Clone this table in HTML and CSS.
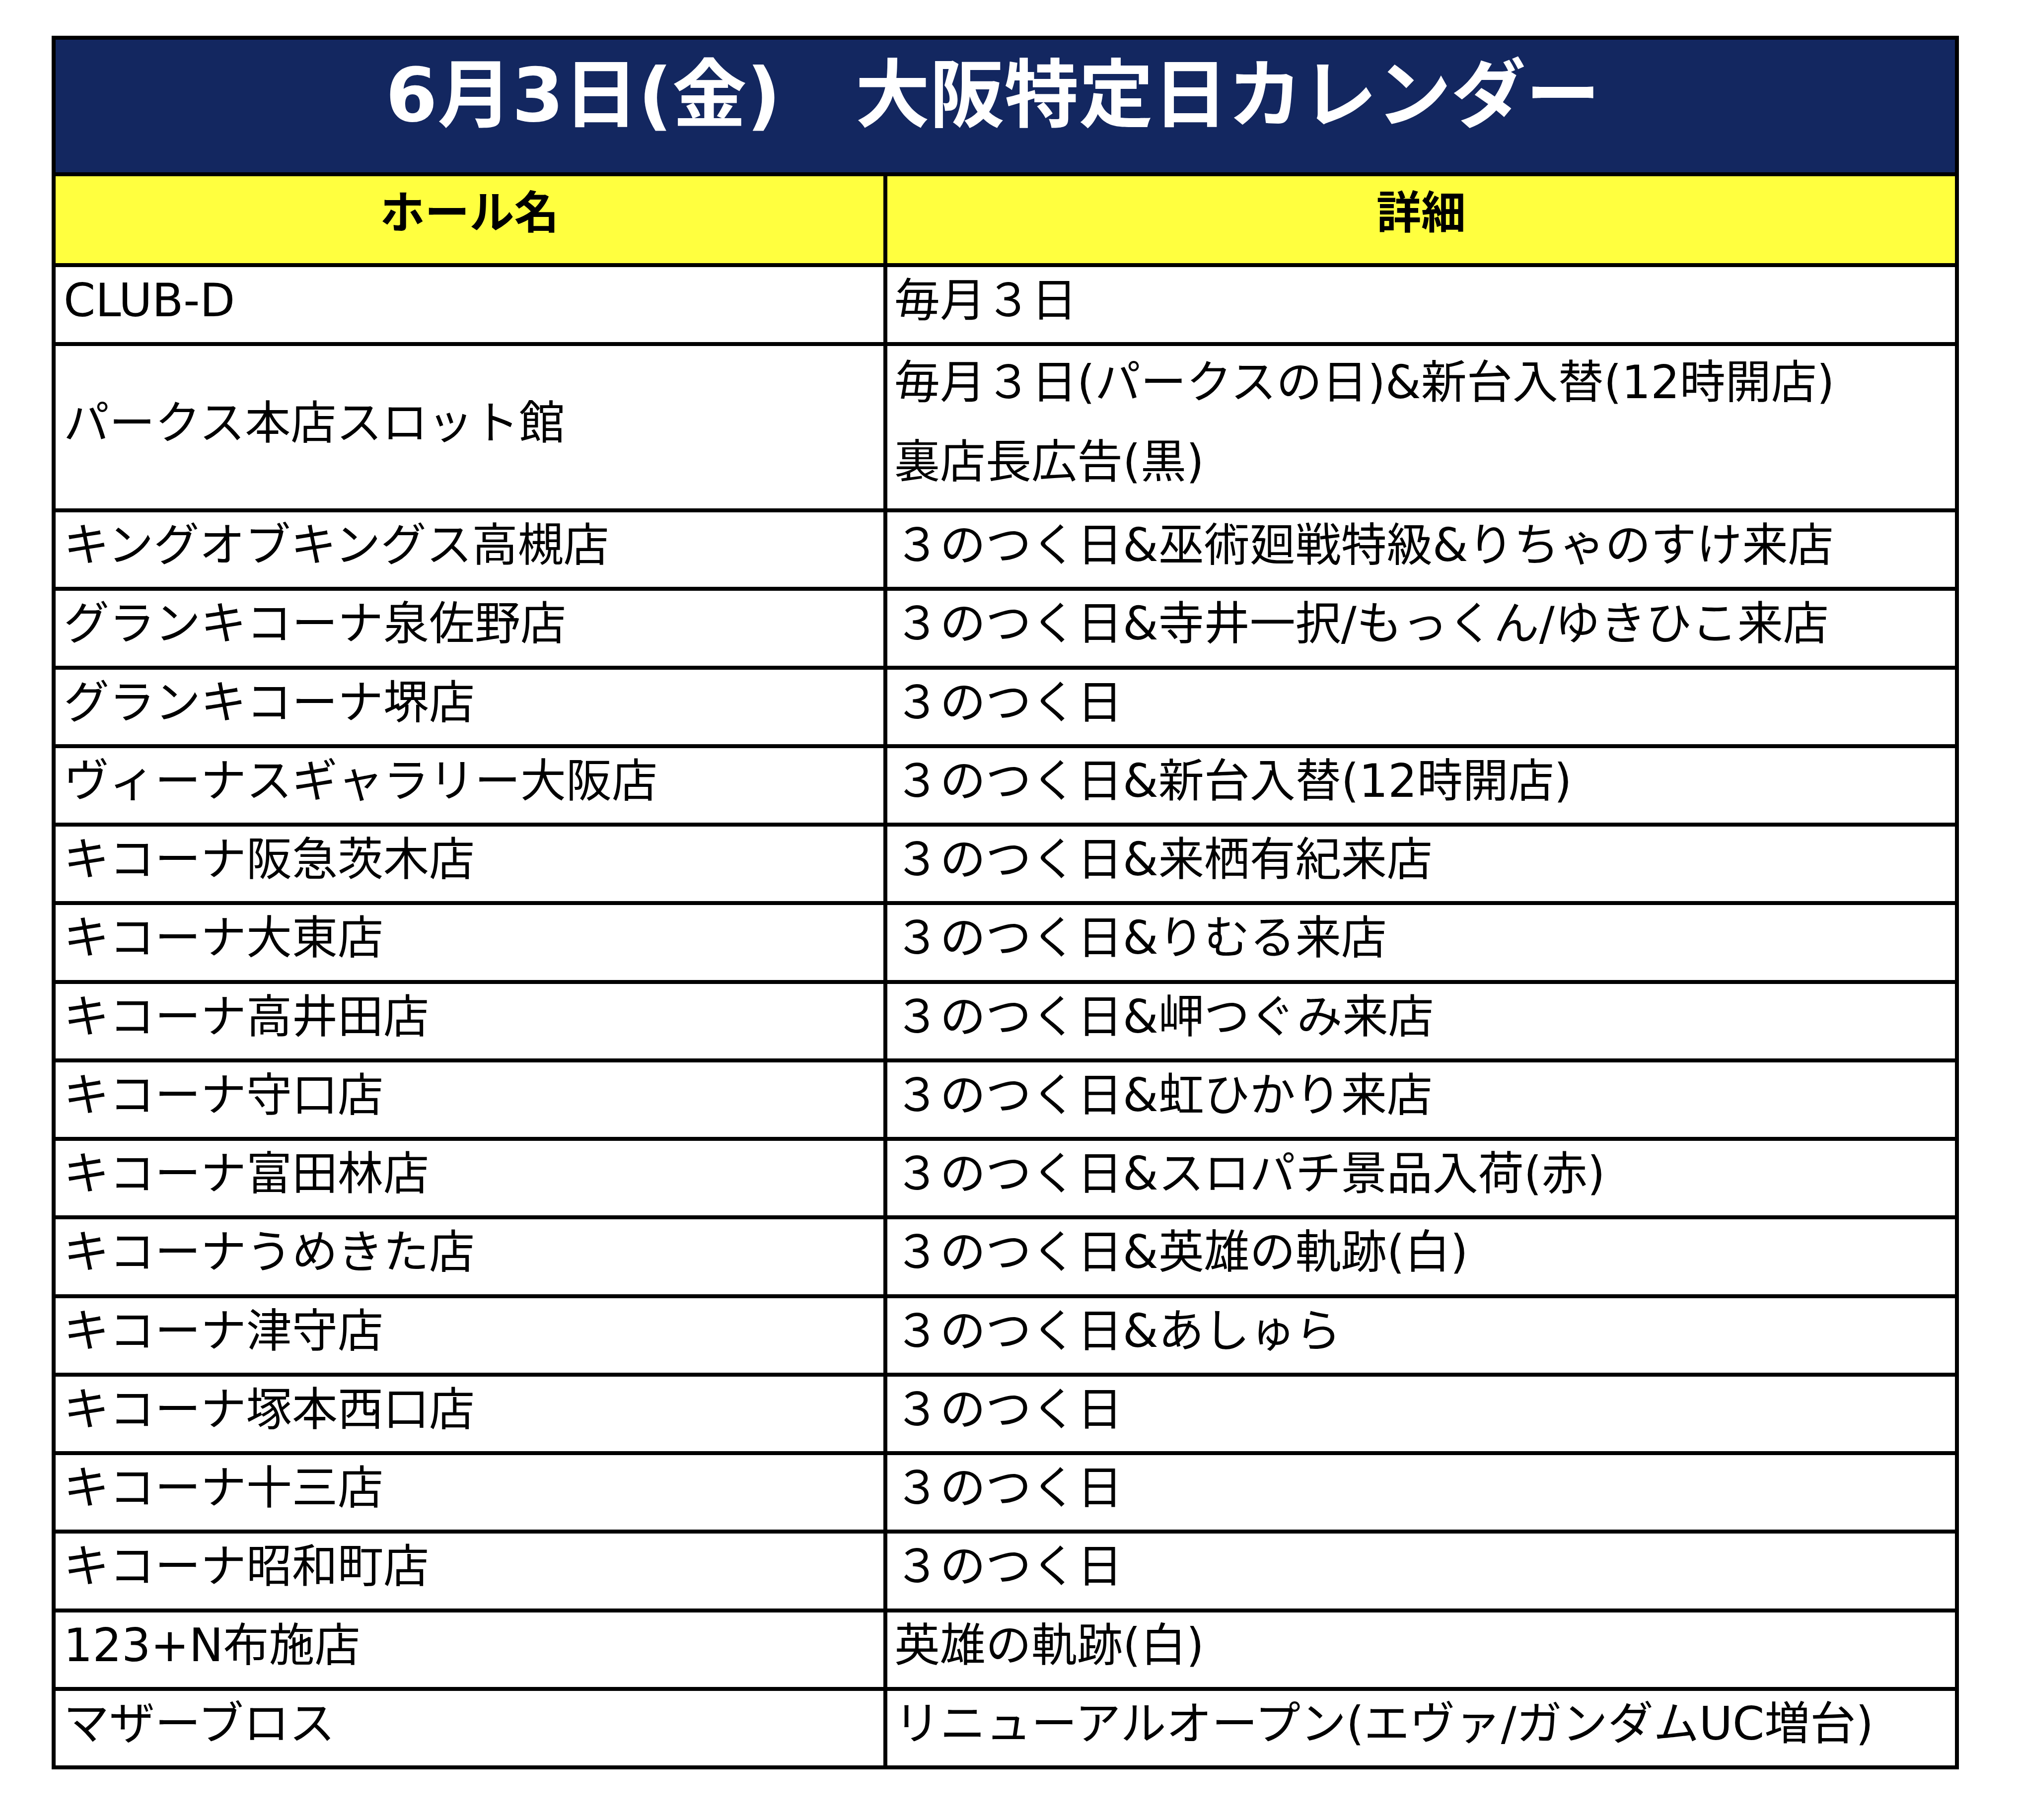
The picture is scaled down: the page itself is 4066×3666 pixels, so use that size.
FILE: index.html
```html
<!DOCTYPE html>
<html lang="ja">
<head>
<meta charset="utf-8">
<title>6月3日(金) 大阪特定日カレンダー</title>
<link rel="stylesheet" href="styles.css">
</head>
<body>
<div class="sheet">
  <div class="title">6月3日(金)　大阪特定日カレンダー</div>
  <div class="row head">
    <div class="cell name">ホール名</div>
    <div class="cell detail">詳細</div>
  </div>
  <div class="row first">
    <div class="cell name">CLUB-D</div>
    <div class="cell detail">毎月３日</div>
  </div>
  <div class="row double">
    <div class="cell name">パークス本店スロット館</div>
    <div class="cell detail"><span class="line">毎月３日(パークスの日)&amp;新台入替(12時開店)</span><span class="line">裏店長広告(黒)</span></div>
  </div>
  <div class="row">
    <div class="cell name">キングオブキングス高槻店</div>
    <div class="cell detail">３のつく日&amp;巫術廻戦特級&amp;りちゃのすけ来店</div>
  </div>
  <div class="row">
    <div class="cell name">グランキコーナ泉佐野店</div>
    <div class="cell detail">３のつく日&amp;寺井一択/もっくん/ゆきひこ来店</div>
  </div>
  <div class="row">
    <div class="cell name">グランキコーナ堺店</div>
    <div class="cell detail">３のつく日</div>
  </div>
  <div class="row">
    <div class="cell name">ヴィーナスギャラリー大阪店</div>
    <div class="cell detail">３のつく日&amp;新台入替(12時開店)</div>
  </div>
  <div class="row">
    <div class="cell name">キコーナ阪急茨木店</div>
    <div class="cell detail">３のつく日&amp;来栖有紀来店</div>
  </div>
  <div class="row">
    <div class="cell name">キコーナ大東店</div>
    <div class="cell detail">３のつく日&amp;りむる来店</div>
  </div>
  <div class="row">
    <div class="cell name">キコーナ高井田店</div>
    <div class="cell detail">３のつく日&amp;岬つぐみ来店</div>
  </div>
  <div class="row">
    <div class="cell name">キコーナ守口店</div>
    <div class="cell detail">３のつく日&amp;虹ひかり来店</div>
  </div>
  <div class="row">
    <div class="cell name">キコーナ富田林店</div>
    <div class="cell detail">３のつく日&amp;スロパチ景品入荷(赤)</div>
  </div>
  <div class="row">
    <div class="cell name">キコーナうめきた店</div>
    <div class="cell detail">３のつく日&amp;英雄の軌跡(白)</div>
  </div>
  <div class="row">
    <div class="cell name">キコーナ津守店</div>
    <div class="cell detail">３のつく日&amp;あしゅら</div>
  </div>
  <div class="row">
    <div class="cell name">キコーナ塚本西口店</div>
    <div class="cell detail">３のつく日</div>
  </div>
  <div class="row">
    <div class="cell name">キコーナ十三店</div>
    <div class="cell detail">３のつく日</div>
  </div>
  <div class="row">
    <div class="cell name">キコーナ昭和町店</div>
    <div class="cell detail">３のつく日</div>
  </div>
  <div class="row">
    <div class="cell name">123+N布施店</div>
    <div class="cell detail">英雄の軌跡(白)</div>
  </div>
  <div class="row">
    <div class="cell name">マザーブロス</div>
    <div class="cell detail">リニューアルオープン(エヴァ/ガンダムUC増台)</div>
  </div>
</div>
</body>
</html>
```

FILE: styles.css
```css
html, body {
  margin: 0;
  padding: 0;
  background: #ffffff;
}

body {
  font-family: "DejaVu Sans", "Noto Sans CJK JP", sans-serif;
  color: #000000;
}

.sheet {
  box-sizing: border-box;
  width: 3841px;
  margin: 72px 0 0 104px;
  border: 8px solid #000000;
}

.title {
  box-sizing: border-box;
  height: 267px;
  background: #132760;
  color: #ffffff;
  font-size: 150px;
  font-weight: bold;
  line-height: 1;
  white-space: nowrap;
  display: flex;
  align-items: center;
  justify-content: center;
  padding-bottom: 44px;
  padding-right: 50px;
}

.row {
  display: grid;
  grid-template-columns: 1667px 2158px;
  border-top: 8px solid #000000;
  height: 150.25px;
}

.row.first {
  height: 151px;
}

.row.double {
  height: 327px;
}

.row.head {
  height: 175px;
  background: #ffff3f;
}

.cell {
  box-sizing: border-box;
  display: flex;
  align-items: center;
  font-size: 92px;
  line-height: 1;
  white-space: nowrap;
  padding-bottom: 16px;
}

.cell.name {
  padding-left: 16px;
}

.cell.detail {
  border-left: 8px solid #000000;
  padding-left: 14px;
}

.row.head .cell {
  justify-content: center;
  font-weight: bold;
  font-size: 90px;
  padding-left: 0;
  padding-bottom: 28px;
}

.row.double .cell.detail {
  flex-direction: column;
  align-items: flex-start;
  justify-content: center;
  gap: 68px;
  padding-bottom: 20px;
}

.line {
  display: block;
}
```
